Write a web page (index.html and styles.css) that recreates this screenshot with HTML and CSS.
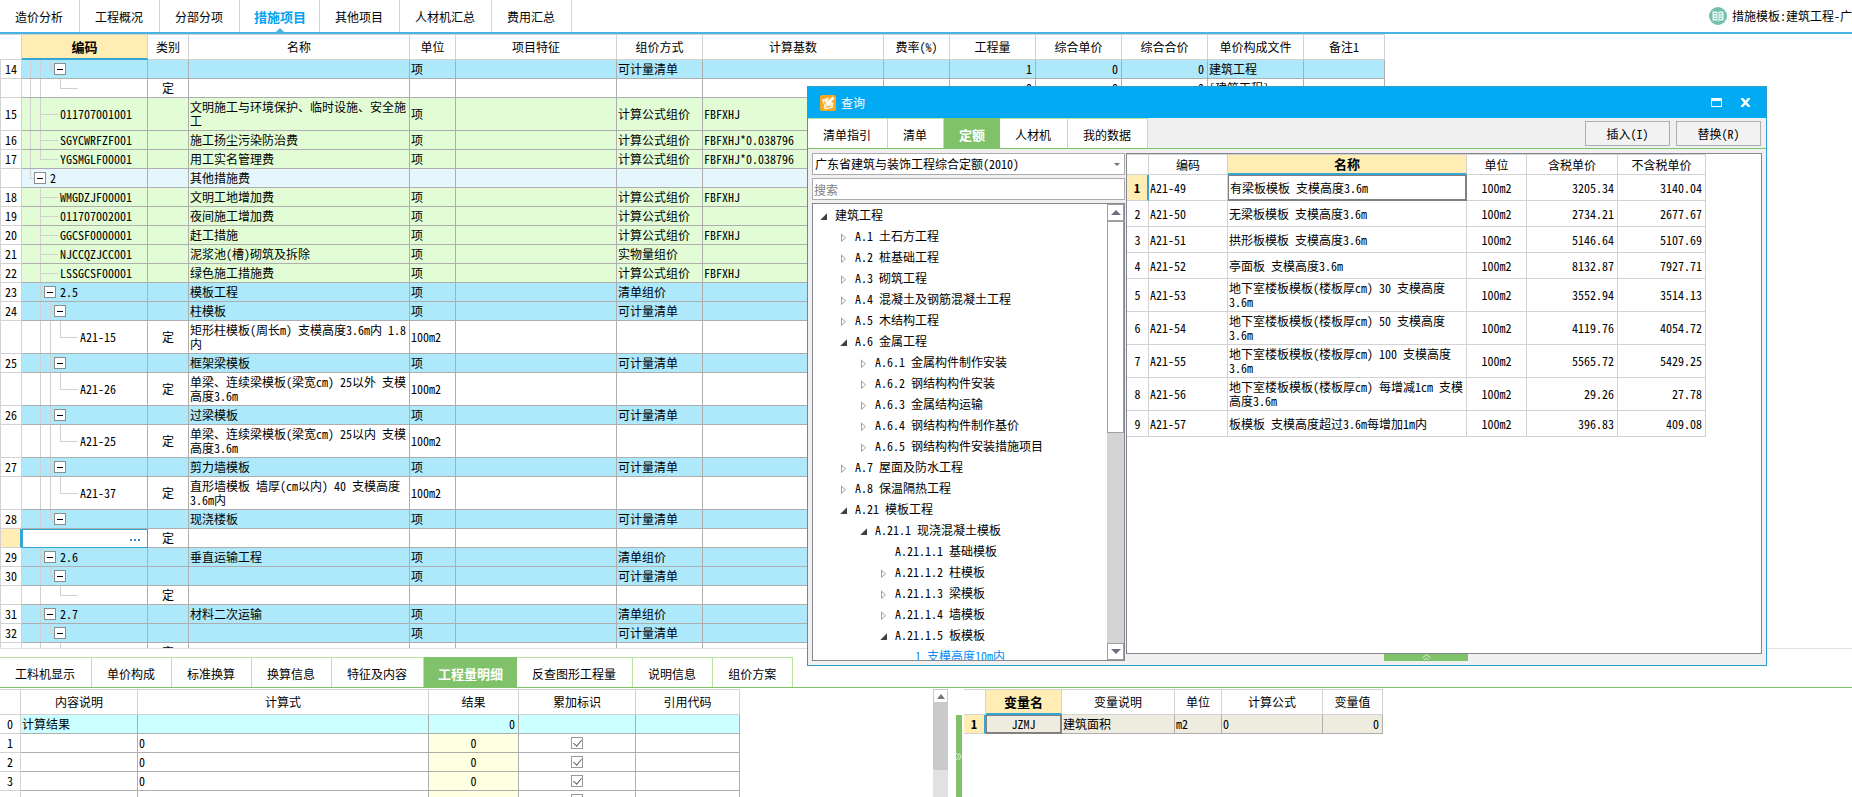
FILE: index.html
```html
<!DOCTYPE html>
<html lang="zh-CN">
<head>
<meta charset="utf-8">
<title>措施项目</title>
<link rel="stylesheet" href="styles.css">
</head>
<body>
<div class="app">
  <header class="topbar">
    <nav class="tabs tabs-blue">
      <button>造价分析</button><button>工程概况</button><button>分部分项</button><button class="on">措施项目</button><button>其他项目</button><button>人材机汇总</button><button>费用汇总</button>
    </nav>
    <div class="template">
      <svg width="18" height="18" viewBox="0 0 18 18"><circle cx="9" cy="9" r="9" fill="#72c1ab"/><path d="M3.5 4.5H8l1 1 1-1h4.500v9H10l-1 1-1-1H3.500z" fill="#e9f6f2"/><path d="M9 5.500v8M5 6.500h2.500M5 9h2.500M5 11.500h2.500M10.500 6.500H13M10.500 9H13M10.500 11.500H13" stroke="#72c1ab" fill="none"/></svg>
      <span>措施模板:建筑工程-广</span>
    </div>
  </header>

  <main class="upper">
    <table class="grid main-grid">
      <colgroup><col class="w22"><col class="w126"><col class="w41"><col class="w221"><col class="w46"><col class="w161"><col class="w86"><col class="w181"><col class="w66"><col class="w86"><col class="w86"><col class="w86"><col class="w96"><col class="w81"></colgroup>
      <thead><tr><th></th><th class="sel">编码</th><th>类别</th><th>名称</th><th>单位</th><th>项目特征</th><th>组价方式</th><th>计算基数</th><th>费率(%)</th><th>工程量</th><th>综合单价</th><th>综合合价</th><th>单价构成文件</th><th>备注1</th></tr></thead>
      <tbody>
      <tr class="blue"><th>14</th><td class="code"><div><i class="v"></i><i class="v"></i><i class="l s"></i><b></b></div></td><td></td><td></td><td>项</td><td></td><td>可计量清单</td><td></td><td></td><td class="num">1</td><td class="num">0</td><td class="num">0</td><td>建筑工程</td><td></td></tr>
      <tr><th></th><td class="code"><div><i class="v"></i><i class="v"></i><i></i><i class="l w"></i></div></td><td class="mid">定</td><td></td><td></td><td></td><td></td><td></td><td></td><td class="num">0</td><td class="num">0</td><td class="num">0</td><td>[建筑工程]</td><td></td></tr>
      <tr class="green tall"><th>15</th><td class="code"><div><i class="v"></i><i class="t w"></i>011707001001</div></td><td></td><td>文明施工与环境保护、临时设施、安全施工</td><td>项</td><td></td><td>计算公式组价</td><td>FBFXHJ</td><td></td><td></td><td></td><td></td><td></td><td></td></tr>
      <tr class="green"><th>16</th><td class="code"><div><i class="v"></i><i class="t w"></i>SGYCWRFZF001</div></td><td></td><td>施工扬尘污染防治费</td><td>项</td><td></td><td>计算公式组价</td><td>FBFXHJ*0.038796</td><td></td><td></td><td></td><td></td><td></td><td></td></tr>
      <tr class="green"><th>17</th><td class="code"><div><i class="v"></i><i class="l w"></i>YGSMGLF00001</div></td><td></td><td>用工实名管理费</td><td>项</td><td></td><td>计算公式组价</td><td>FBFXHJ*0.038796</td><td></td><td></td><td></td><td></td><td></td><td></td></tr>
      <tr class="pale"><th></th><td class="code"><div><i class="l s"></i><b></b>2</div></td><td></td><td>其他措施费</td><td></td><td></td><td></td><td></td><td></td><td></td><td></td><td></td><td></td><td></td></tr>
      <tr class="green"><th>18</th><td class="code"><div><i></i><i class="t w"></i>WMGDZJF00001</div></td><td></td><td>文明工地增加费</td><td>项</td><td></td><td>计算公式组价</td><td>FBFXHJ</td><td></td><td></td><td></td><td></td><td></td><td></td></tr>
      <tr class="green"><th>19</th><td class="code"><div><i></i><i class="t w"></i>011707002001</div></td><td></td><td>夜间施工增加费</td><td>项</td><td></td><td>计算公式组价</td><td></td><td></td><td></td><td></td><td></td><td></td><td></td></tr>
      <tr class="green"><th>20</th><td class="code"><div><i></i><i class="t w"></i>GGCSF0000001</div></td><td></td><td>赶工措施</td><td>项</td><td></td><td>计算公式组价</td><td>FBFXHJ</td><td></td><td></td><td></td><td></td><td></td><td></td></tr>
      <tr class="green"><th>21</th><td class="code"><div><i></i><i class="t w"></i>NJCCQZJCC001</div></td><td></td><td>泥浆池(槽)砌筑及拆除</td><td>项</td><td></td><td>实物量组价</td><td></td><td></td><td></td><td></td><td></td><td></td><td></td></tr>
      <tr class="green"><th>22</th><td class="code"><div><i></i><i class="t w"></i>LSSGCSF00001</div></td><td></td><td>绿色施工措施费</td><td>项</td><td></td><td>计算公式组价</td><td>FBFXHJ</td><td></td><td></td><td></td><td></td><td></td><td></td></tr>
      <tr class="blue"><th>23</th><td class="code"><div><i></i><i class="t s"></i><b></b>2.5</div></td><td></td><td>模板工程</td><td>项</td><td></td><td>清单组价</td><td></td><td></td><td></td><td></td><td></td><td></td><td></td></tr>
      <tr class="blue"><th>24</th><td class="code"><div><i></i><i class="v"></i><i class="t s"></i><b></b></div></td><td></td><td>柱模板</td><td>项</td><td></td><td>可计量清单</td><td></td><td></td><td></td><td></td><td></td><td></td><td></td></tr>
      <tr class="tall"><th></th><td class="code"><div><i></i><i class="v"></i><i class="v"></i><i class="l w"></i>A21-15</div></td><td class="mid">定</td><td>矩形柱模板(周长m) 支模高度3.6m内 1.8内</td><td>100m2</td><td></td><td></td><td></td><td></td><td></td><td></td><td></td><td></td><td></td></tr>
      <tr class="blue"><th>25</th><td class="code"><div><i></i><i class="v"></i><i class="t s"></i><b></b></div></td><td></td><td>框架梁模板</td><td>项</td><td></td><td>可计量清单</td><td></td><td></td><td></td><td></td><td></td><td></td><td></td></tr>
      <tr class="tall"><th></th><td class="code"><div><i></i><i class="v"></i><i class="v"></i><i class="l w"></i>A21-26</div></td><td class="mid">定</td><td>单梁、连续梁模板(梁宽cm) 25以外 支模高度3.6m</td><td>100m2</td><td></td><td></td><td></td><td></td><td></td><td></td><td></td><td></td><td></td></tr>
      <tr class="blue"><th>26</th><td class="code"><div><i></i><i class="v"></i><i class="t s"></i><b></b></div></td><td></td><td>过梁模板</td><td>项</td><td></td><td>可计量清单</td><td></td><td></td><td></td><td></td><td></td><td></td><td></td></tr>
      <tr class="tall"><th></th><td class="code"><div><i></i><i class="v"></i><i class="v"></i><i class="l w"></i>A21-25</div></td><td class="mid">定</td><td>单梁、连续梁模板(梁宽cm) 25以内 支模高度3.6m</td><td>100m2</td><td></td><td></td><td></td><td></td><td></td><td></td><td></td><td></td><td></td></tr>
      <tr class="blue"><th>27</th><td class="code"><div><i></i><i class="v"></i><i class="t s"></i><b></b></div></td><td></td><td>剪力墙模板</td><td>项</td><td></td><td>可计量清单</td><td></td><td></td><td></td><td></td><td></td><td></td><td></td></tr>
      <tr class="tall"><th></th><td class="code"><div><i></i><i class="v"></i><i class="v"></i><i class="l w"></i>A21-37</div></td><td class="mid">定</td><td>直形墙模板 墙厚(cm以内) 40 支模高度3.6m内</td><td>100m2</td><td></td><td></td><td></td><td></td><td></td><td></td><td></td><td></td><td></td></tr>
      <tr class="blue"><th>28</th><td class="code"><div><i></i><i class="v"></i><i class="l s"></i><b></b></div></td><td></td><td>现浇楼板</td><td>项</td><td></td><td>可计量清单</td><td></td><td></td><td></td><td></td><td></td><td></td><td></td></tr>
      <tr><th class="cur"></th><td class="editing"><button aria-label="选择编码"><svg width="10" height="2" viewBox="0 0 10 2"><path d="M0 0h2v2H0zM4 0h2v2H4zM8 0h2v2H8z" fill="#3f86c6"/></svg></button></td><td class="mid">定</td><td></td><td></td><td></td><td></td><td></td><td></td><td></td><td></td><td></td><td></td><td></td></tr>
      <tr class="blue"><th>29</th><td class="code"><div><i></i><i class="t s"></i><b></b>2.6</div></td><td></td><td>垂直运输工程</td><td>项</td><td></td><td>清单组价</td><td></td><td></td><td></td><td></td><td></td><td></td><td></td></tr>
      <tr class="blue"><th>30</th><td class="code"><div><i></i><i class="v"></i><i class="l s"></i><b></b></div></td><td></td><td></td><td>项</td><td></td><td>可计量清单</td><td></td><td></td><td></td><td></td><td></td><td></td><td></td></tr>
      <tr><th></th><td class="code"><div><i></i><i class="v"></i><i></i><i class="l w"></i></div></td><td class="mid">定</td><td></td><td></td><td></td><td></td><td></td><td></td><td></td><td></td><td></td><td></td><td></td></tr>
      <tr class="blue"><th>31</th><td class="code"><div><i></i><i class="t s"></i><b></b>2.7</div></td><td></td><td>材料二次运输</td><td>项</td><td></td><td>清单组价</td><td></td><td></td><td></td><td></td><td></td><td></td><td></td></tr>
      <tr class="blue"><th>32</th><td class="code"><div><i></i><i class="v"></i><i class="l s"></i><b></b></div></td><td></td><td></td><td>项</td><td></td><td>可计量清单</td><td></td><td></td><td></td><td></td><td></td><td></td><td></td></tr>
      <tr><th></th><td class="code"><div><i></i><i class="v"></i><i></i><i class="l w"></i></div></td><td class="mid">定</td><td></td><td></td><td></td><td></td><td></td><td></td><td></td><td></td><td></td><td></td><td></td></tr>
      </tbody>
    </table>
  </main>

  <section class="lower">
    <nav class="tabs tabs-green">
      <button>工料机显示</button><button>单价构成</button><button>标准换算</button><button>换算信息</button><button>特征及内容</button><button class="on">工程量明细</button><button>反查图形工程量</button><button>说明信息</button><button>组价方案</button>
    </nav>
    <div class="panes">
      <div class="detail">
        <table class="grid detail-grid">
          <colgroup><col class="w21"><col class="w117"><col class="w291"><col class="w90"><col class="w117"><col class="w104"></colgroup>
          <thead><tr><th></th><th>内容说明</th><th>计算式</th><th>结果</th><th>累加标识</th><th>引用代码</th></tr></thead>
          <tbody>
          <tr class="cyan"><th>0</th><td>计算结果</td><td></td><td class="num">0</td><td></td><td></td></tr>
          <tr><th>1</th><td></td><td>0</td><td class="mid yellow">0</td><td class="mid"><input type="checkbox" checked aria-label="累加标识 1"></td><td></td></tr>
          <tr><th>2</th><td></td><td>0</td><td class="mid yellow">0</td><td class="mid"><input type="checkbox" checked aria-label="累加标识 2"></td><td></td></tr>
          <tr><th>3</th><td></td><td>0</td><td class="mid yellow">0</td><td class="mid"><input type="checkbox" checked aria-label="累加标识 3"></td><td></td></tr>
          <tr><th></th><td></td><td></td><td class="mid yellow"></td><td class="mid"><input type="checkbox" checked aria-label="累加标识 4"></td><td></td></tr>
          </tbody>
        </table>
        <div class="vscroll"><button aria-label="向上"><svg width="8" height="5" viewBox="0 0 8 5"><path d="M4 0l4 5H0z" fill="#777"/></svg></button><div class="thumb"></div></div>
      </div>
      <div class="vars">
        <button class="fold" aria-label="折叠"><svg width="6" height="9" viewBox="0 0 6 9"><path d="M0 1l3 3.500L0 8M2.500 1l3 3.500-3 3.500" fill="none" stroke="#e4f5dc"/></svg></button>
        <table class="grid var-grid">
          <colgroup><col class="w22"><col class="w76"><col class="w113"><col class="w47"><col class="w101"><col class="w60"></colgroup>
          <thead><tr><th></th><th class="sel">变量名</th><th>变量说明</th><th>单位</th><th>计算公式</th><th>变量值</th></tr></thead>
          <tbody><tr class="beige"><th class="cur">1</th><td class="mid focus">JZMJ</td><td>建筑面积</td><td>m2</td><td>0</td><td class="num">0</td></tr></tbody>
        </table>
      </div>
    </div>
  </section>

  <section class="dialog" role="dialog" aria-label="查询">
    <div class="titlebar">
      <svg width="16" height="16" viewBox="0 0 16 16"><rect width="16" height="16" rx="2" fill="#f9a71c"/><path d="M2 4.500L9 2.500 8 6l3 1 2.500 1-1 5L5 14.500 3.500 12l1-2L3 8z" fill="#fff4dc"/><path d="M4 6.500l2.500 3.500L12 4M6 12.500l5-1.500" fill="none" stroke="#f4a024" stroke-width="1.200"/><path d="M12.500 1.500l2 2L8 10l-2.500.500L6.500 8z" fill="#fff"/></svg>
      <h1>查询</h1>
      <button aria-label="最大化"><svg width="11" height="9" viewBox="0 0 11 9"><path d="M.500.500h10v8H.500zM0 1.500h11M0 2.500h11" fill="none" stroke="#fff"/></svg></button>
      <button aria-label="关闭"><svg width="11" height="9" viewBox="0 0 11 9"><path d="M1.500 0l8 9M9.500 0l-8 9" stroke="#fff" stroke-width="2.500"/></svg></button>
    </div>
    <div class="toolbar">
      <nav class="tabs tabs-green">
        <button>清单指引</button><button>清单</button><button class="on">定额</button><button>人材机</button><button>我的数据</button>
      </nav>
      <div class="actions"><button>插入(I)</button><button>替换(R)</button></div>
    </div>
    <div class="dialog-body">
      <div class="browser">
        <div class="combo"><select aria-label="定额库"><option>广东省建筑与装饰工程综合定额(2010)</option></select></div>
        <input class="search" type="text" placeholder="搜索" aria-label="搜索">
        <div class="tree-box">
          <ul class="tree">
            <li class="open">建筑工程
              <ul>
                <li class="shut">A.1 土石方工程</li>
                <li class="shut">A.2 桩基础工程</li>
                <li class="shut">A.3 砌筑工程</li>
                <li class="shut">A.4 混凝土及钢筋混凝土工程</li>
                <li class="shut">A.5 木结构工程</li>
                <li class="open">A.6 金属工程
                  <ul>
                    <li class="shut">A.6.1 金属构件制作安装</li>
                    <li class="shut">A.6.2 钢结构构件安装</li>
                    <li class="shut">A.6.3 金属结构运输</li>
                    <li class="shut">A.6.4 钢结构构件制作基价</li>
                    <li class="shut">A.6.5 钢结构构件安装措施项目</li>
                  </ul>
                </li>
                <li class="shut">A.7 屋面及防水工程</li>
                <li class="shut">A.8 保温隔热工程</li>
                <li class="open">A.21 模板工程
                  <ul>
                    <li class="open">A.21.1 现浇混凝土模板
                      <ul>
                        <li>A.21.1.1 基础模板</li>
                        <li class="shut">A.21.1.2 柱模板</li>
                        <li class="shut">A.21.1.3 梁模板</li>
                        <li class="shut">A.21.1.4 墙模板</li>
                        <li class="open">A.21.1.5 板模板
                          <ul><li class="picked">1 支模高度10m内</li></ul>
                        </li>
                      </ul>
                    </li>
                  </ul>
                </li>
              </ul>
            </li>
          </ul>
          <div class="tree-scroll">
            <button aria-label="向上"><svg width="10" height="5" viewBox="0 0 10 5"><path d="M5 0l5 5H0z" fill="#6b7080"/></svg></button>
            <div class="thumb"></div>
            <button aria-label="向下"><svg width="10" height="5" viewBox="0 0 10 5"><path d="M5 5l5-5H0z" fill="#6b7080"/></svg></button>
          </div>
        </div>
      </div>
      <div class="results">
        <div class="results-box">
          <table class="grid quota-grid">
            <colgroup><col class="w22"><col class="w79"><col class="w239"><col class="w60"><col class="w91"><col class="w88"></colgroup>
            <thead><tr><th></th><th>编码</th><th class="sel">名称</th><th>单位</th><th>含税单价</th><th>不含税单价</th></tr></thead>
            <tbody>
            <tr><th class="cur">1</th><td>A21-49</td><td class="focus">有梁板模板 支模高度3.6m</td><td class="mid">100m2</td><td class="num">3205.34</td><td class="num">3140.04</td></tr>
            <tr><th>2</th><td>A21-50</td><td>无梁板模板 支模高度3.6m</td><td class="mid">100m2</td><td class="num">2734.21</td><td class="num">2677.67</td></tr>
            <tr><th>3</th><td>A21-51</td><td>拱形板模板 支模高度3.6m</td><td class="mid">100m2</td><td class="num">5146.64</td><td class="num">5107.69</td></tr>
            <tr><th>4</th><td>A21-52</td><td>亭面板 支模高度3.6m</td><td class="mid">100m2</td><td class="num">8132.87</td><td class="num">7927.71</td></tr>
            <tr class="tall"><th>5</th><td>A21-53</td><td>地下室楼板模板(楼板厚cm) 30 支模高度3.6m</td><td class="mid">100m2</td><td class="num">3552.94</td><td class="num">3514.13</td></tr>
            <tr class="tall"><th>6</th><td>A21-54</td><td>地下室楼板模板(楼板厚cm) 50 支模高度3.6m</td><td class="mid">100m2</td><td class="num">4119.76</td><td class="num">4054.72</td></tr>
            <tr class="tall"><th>7</th><td>A21-55</td><td>地下室楼板模板(楼板厚cm) 100 支模高度3.6m</td><td class="mid">100m2</td><td class="num">5565.72</td><td class="num">5429.25</td></tr>
            <tr class="tall"><th>8</th><td>A21-56</td><td>地下室楼板模板(楼板厚cm) 每增减1cm 支模高度3.6m</td><td class="mid">100m2</td><td class="num">29.26</td><td class="num">27.78</td></tr>
            <tr><th>9</th><td>A21-57</td><td>板模板 支模高度超过3.6m每增加1m内</td><td class="mid">100m2</td><td class="num">396.83</td><td class="num">409.08</td></tr>
            </tbody>
          </table>
        </div>
        <button class="expand" aria-label="展开"><svg width="9" height="6" viewBox="0 0 9 6"><path d="M.500 4l4-3.500 4 3.500M2.500 6l2-2 2 2" fill="none" stroke="#e4f5dc"/></svg></button>
      </div>
    </div>
  </section>
</div>
</body>
</html>
```

FILE: styles.css
```css
* { box-sizing: border-box; }
body { margin: 0; background: #fff; }
body, button, input, select {
  font-family: "Noto Sans Mono CJK SC", "Noto Sans CJK SC", monospace;
  font-size: 12px;
  line-height: 14px;
  color: #000;
}
button { border: 0; padding: 0; background: none; }
svg { display: block; flex: none; }

.app { position: relative; display: flex; flex-direction: column; height: 100vh; overflow: hidden; }

/* top navigation */
.topbar { display: flex; justify-content: space-between; height: 34px; flex: none; border-bottom: 2px solid #45b3e3; }
.tabs { display: flex; }
.tabs button { position: relative; padding: 2px 16px 0 15px; border-right: 1px solid #d4d4d4; white-space: nowrap; }
.tabs .on { padding-left: 14px; padding-right: 13px; font-size: 13px; font-weight: bold; }
.tabs-blue .on { color: #05a3ef; }
.tabs-blue .on::after {
  content: ""; position: absolute; left: 50%; bottom: 0; margin-left: -4px;
  border: 4px solid transparent; border-top: 0; border-bottom-color: #45b3e3;
}
.template { display: flex; align-items: center; gap: 5px; white-space: nowrap; }

/* data grids */
.grid { border-collapse: separate; border-spacing: 0; table-layout: fixed; width: 0; flex: none; }
.grid th, .grid td { border: 0 solid #aeaeae; border-width: 0 1px 1px 0; padding: 0 1px; height: 19px; overflow: hidden; }
.grid th { border-color: #d2d2d2; font-weight: normal; padding: 0; }
.grid thead th { height: 26px; border-top-width: 1px; }
.grid td { text-align: left; }
.grid .num { text-align: right; padding-right: 3px; }
.grid .mid { text-align: center; }
.grid .tall th, .grid .tall td { height: 33px; }
.grid thead .sel { background: #ffedb3; font-size: 13px; font-weight: bold; border-bottom: 2px solid #36a5d3; }
.grid tbody .cur { background: #ffedb3; font-weight: bold; border-right: 2px solid #36a5d3; }
.grid .focus { border: 2px solid #808080; border-width: 1px 2px 2px 1px; }
.blue td { background: #ade8fb; }
.green td { background: #e2fdd6; }
.pale td { background: #e5f6fd; }
.cyan td { background: #ccffff; }
.beige td { background: #eeecde; }
.grid .yellow { background: #ffffe1; }

.w21 { width: 21px; } .w22 { width: 22px; } .w41 { width: 41px; } .w46 { width: 46px; }
.w47 { width: 47px; } .w60 { width: 60px; } .w66 { width: 66px; } .w76 { width: 76px; }
.w79 { width: 79px; } .w81 { width: 81px; } .w86 { width: 86px; } .w88 { width: 88px; }
.w90 { width: 90px; } .w91 { width: 91px; } .w96 { width: 96px; } .w101 { width: 101px; }
.w104 { width: 104px; } .w113 { width: 113px; } .w117 { width: 117px; } .w126 { width: 126px; }
.w161 { width: 161px; } .w181 { width: 181px; } .w221 { width: 221px; } .w239 { width: 239px; }
.w291 { width: 291px; }

.upper { flex: 1; min-height: 0; overflow: hidden; border-bottom: 1px solid #e0e0e0; }
.main-grid tbody th { border-left-width: 1px; }

/* outline guides in the code column */
.grid .code { padding: 0 0 0 8px; }
.code div { display: flex; align-items: center; height: 100%; }
.code i { width: 10px; height: 100%; flex: none; --c: #d0d0d0; background-repeat: no-repeat; }
.code .s { width: 4px; }
.code .w { width: 18px; margin-right: 2px; }
.code .v { background-image: linear-gradient(var(--c), var(--c)); background-size: 1px 100%; }
.code .t { background-image: linear-gradient(var(--c), var(--c)), linear-gradient(var(--c), var(--c)); background-size: 1px 100%, 100% 1px; background-position: 0 0, 0 50%; }
.code .l { background-image: linear-gradient(var(--c), var(--c)), linear-gradient(var(--c), var(--c)); background-size: 1px 50%, 100% 1px; background-position: 0 0, 0 50%; }
.code b {
  width: 12px; height: 12px; flex: none; margin-right: 4px; border: 1px solid #8c8c8c;
  background: linear-gradient(#000, #000) 50% 50% / 6px 1px no-repeat #fff;
}
.grid .editing { border: 1px solid #36a5d3; text-align: right; padding-right: 7px; }
.editing button { display: inline-block; vertical-align: middle; }

/* lower panes */
.lower { flex: 0 0 140px; margin-top: 8px; display: flex; flex-direction: column; min-height: 0; }
.tabs-green { height: 31px; }
.tabs-green button { border-right-color: #b4e69c; border-top: 1px solid #b4e69c; background: #fff; }
.tabs-green .on { background: #80c269; color: #fff; border-color: #80c269; }
.lower .tabs-green { border-bottom: 1px solid #80c269; flex: none; }
.panes { display: flex; flex: 1; min-height: 0; padding-top: 1px; overflow: hidden; }
.detail { flex: 948; display: flex; justify-content: space-between; min-width: 0; }
.vars { flex: 904; display: flex; min-width: 0; align-items: flex-start; }
.vscroll { width: 15px; background: #e1e1e1; }
.vscroll button { display: flex; align-items: center; justify-content: center; width: 15px; height: 14px; border: 1px solid #c8c8c8; background: #fff; }
.vscroll .thumb { height: 67px; background: #cacaca; }
.fold { width: 6px; margin: 26px 2px 0 8px; align-self: stretch; background: #80c269; display: flex; align-items: center; justify-content: center; }
.detail-grid input {
  appearance: none; display: block; position: relative; width: 12px; height: 12px; margin: 0 auto;
  border: 1px solid #999; background: #fff;
}
.detail-grid input::before {
  content: ""; position: absolute; left: 3px; top: 0; width: 4px; height: 7px;
  border: solid #606070; border-width: 0 1px 1px 0; transform: rotate(40deg);
}

/* floating query window */
.dialog {
  position: absolute; left: 807px; top: 86px; width: 960px; height: 580px;
  display: flex; flex-direction: column; background: #f0f0f0; border: 1px solid #2e9fcb;
}
.titlebar { display: flex; align-items: center; height: 31px; flex: none; padding: 0 15px 0 12px; background: #02a9f3; }
.titlebar h1 { margin: 0 auto 0 5px; font-size: 12px; font-weight: normal; color: #fff; }
.titlebar button + button { margin-left: 18px; }
.toolbar { display: flex; justify-content: space-between; height: 31px; flex: none; border-bottom: 1px solid #80c269; }
.toolbar .tabs { height: 30px; }
.toolbar .on { padding-left: 15px; padding-right: 14px; }
.actions { display: flex; gap: 6px; padding: 3px 5px 2px 0; }
.actions button { width: 85px; border: 1px solid #adadad; background: #f2f2f2; }
.dialog-body { display: flex; flex: 1; min-height: 0; padding: 4px; gap: 1px; }
.browser { display: flex; flex-direction: column; gap: 3px; width: 313px; flex: none; }
.combo { position: relative; height: 22px; flex: none; }
.combo select { appearance: none; width: 100%; height: 22px; margin: 0; padding: 0 20px 0 2px; border: 1px solid #ababab; border-radius: 0; background: #fff; }
.combo::after { content: ""; position: absolute; right: 5px; top: 10px; border: 3px solid transparent; border-top-color: #6b7080; border-bottom: 0; pointer-events: none; }
.search { height: 22px; flex: none; padding: 0 1px; border: 1px solid #ababab; border-radius: 0; }
.search::placeholder { color: #808080; }
.tree-box { display: flex; flex: 1; min-height: 0; border: 1px solid #828790; background: #fff; overflow: hidden; }
.tree { flex: 1; padding: 0 0 0 22px; overflow: hidden; }
.tree, .tree ul { margin: 0; list-style: none; }
.tree ul { padding: 0 0 0 20px; }
.tree li { line-height: 21px; white-space: nowrap; }
.tree li::before { content: ""; display: inline-block; width: 7px; height: 9px; margin: 0 8px 0 -15px; background: #000; vertical-align: middle; }
.tree li:not(.open):not(.shut)::before { background: none; }
.tree .open::before { height: 7px; background: #404040; clip-path: polygon(100% 0, 100% 100%, 0 100%); }
.tree .shut::before {
  background: #a0a0a0;
  clip-path: polygon(evenodd, 1px 0, 6px 4.5px, 1px 9px, 1px 0, 2px 2px, 5px 4.5px, 2px 7px, 2px 2px);
}
.tree .picked { color: #0a8cf5; }
.tree-scroll { display: flex; flex-direction: column; width: 17px; flex: none; background: #d4d4d4; }
.tree-scroll button { display: flex; align-items: center; justify-content: center; height: 17px; flex: none; border: 1px solid #a0a0a0; background: #fff; }
.tree-scroll .thumb { flex: 0 0 212px; margin-bottom: auto; border: 1px solid #a0a0a0; background: #fff; }
.results { display: flex; flex-direction: column; flex: 1; min-width: 0; }
.results-box { flex: 1; min-height: 0; overflow: hidden; border: 1px solid #828790; background: #fff; }
.expand { display: flex; justify-content: center; align-self: center; width: 84px; height: 7px; margin-right: 36px; background: #80c269; }
.quota-grid th, .quota-grid td { height: 26px; border-color: #d2d2d2; }
.quota-grid thead th { height: 21px; }
```
